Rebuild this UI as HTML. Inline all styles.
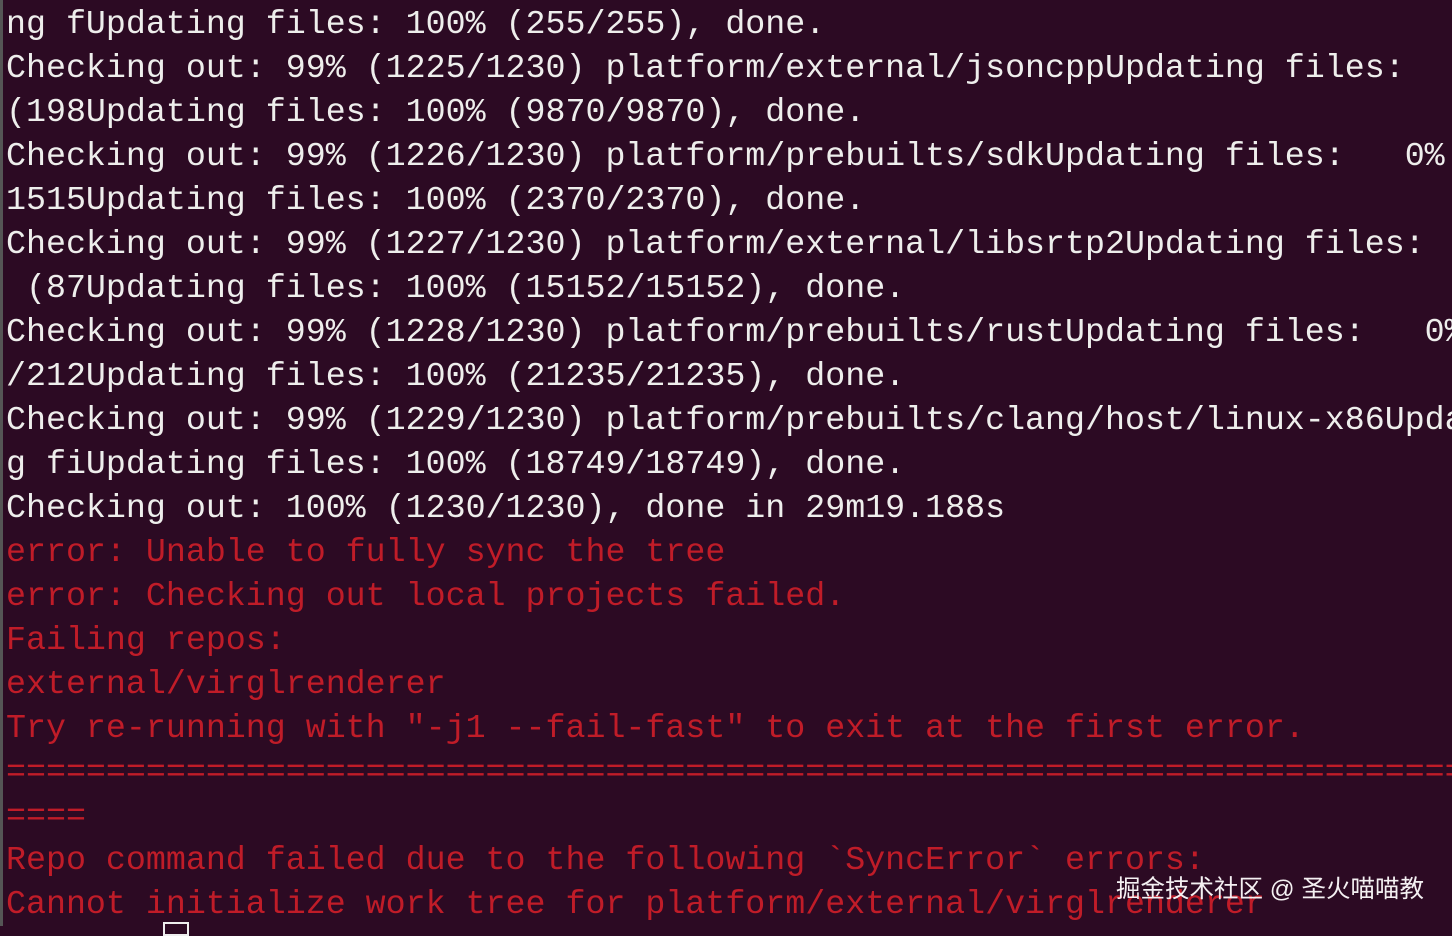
<!DOCTYPE html>
<html><head><meta charset="utf-8"><style>
html,body{margin:0;padding:0;width:1452px;height:926px;overflow:hidden;background:#2c0a23;}
.t{position:absolute;left:6px;top:2px;font-family:"Liberation Mono","DejaVu Sans Mono",monospace;font-size:33.3px;line-height:44px;white-space:pre;color:#eeeeec;}
.r{color:#c01c28;}
.wm{position:absolute;left:1116px;top:870px;font-family:"Liberation Sans","Noto Sans CJK SC",sans-serif;font-size:24.5px;color:#f4f0f2;white-space:nowrap;}
.bar{position:absolute;left:0;top:0;width:3px;height:926px;background:#555;}
.cur{position:absolute;left:163px;top:922px;width:22px;height:10px;border:2px solid #eee;}
</style></head><body>
<div class="bar"></div>
<div class="t">ng fUpdating files: 100% (255/255), done.
Checking out: 99% (1225/1230) platform/external/jsoncppUpdating files:
(198Updating files: 100% (9870/9870), done.
Checking out: 99% (1226/1230) platform/prebuilts/sdkUpdating files:   0%
1515Updating files: 100% (2370/2370), done.
Checking out: 99% (1227/1230) platform/external/libsrtp2Updating files:
 (87Updating files: 100% (15152/15152), done.
Checking out: 99% (1228/1230) platform/prebuilts/rustUpdating files:   0%
/212Updating files: 100% (21235/21235), done.
Checking out: 99% (1229/1230) platform/prebuilts/clang/host/linux-x86Upda
g fiUpdating files: 100% (18749/18749), done.
Checking out: 100% (1230/1230), done in 29m19.188s
<span class="r">error: Unable to fully sync the tree
error: Checking out local projects failed.
Failing repos:
external/virglrenderer
Try re-running with "-j1 --fail-fast" to exit at the first error.
==========================================================================
====
Repo command failed due to the following `SyncError` errors:
Cannot initialize work tree for platform/external/virglrenderer</span></div>
<div class="cur"></div>
<div class="wm">掘金技术社区 @ 圣火喵喵教</div>
</body></html>
